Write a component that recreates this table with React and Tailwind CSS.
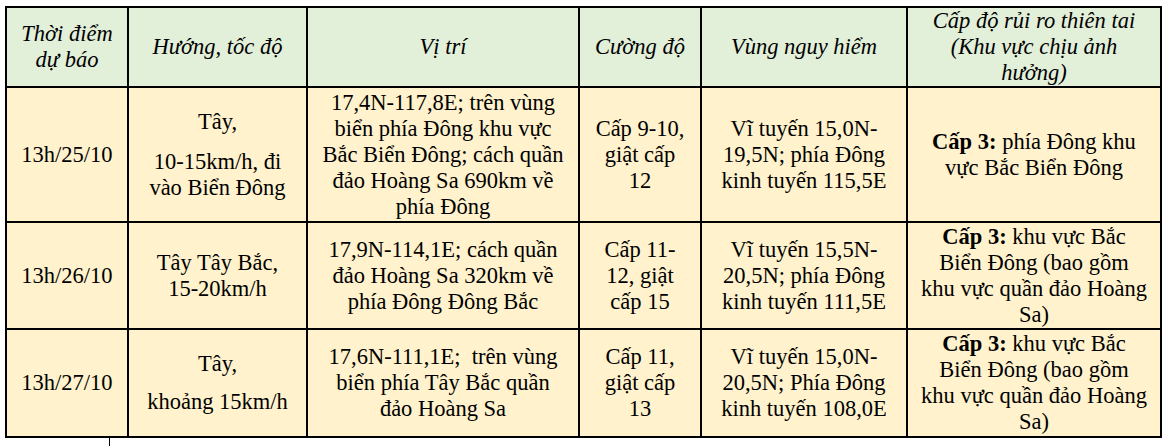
const headers = [
  ['Thời điểm', 'dự báo'],
  ['Hướng, tốc độ'],
  ['Vị trí'],
  ['Cường độ'],
  ['Vùng nguy hiểm'],
  ['Cấp độ rủi ro thiên tai', '(Khu vực chịu ảnh', 'hưởng)'],
]

const rows = [
  {
    h: 'h-[135px]',
    time: '13h/25/10',
    dir: [['Tây,'], ['10-15km/h, đi', 'vào Biển Đông']],
    gap: 'mt-[14px]',
    pos: ['17,4N-117,8E; trên vùng', 'biển phía Đông khu vực', 'Bắc Biển Đông; cách quần', 'đảo Hoàng Sa 690km về', 'phía Đông'],
    power: ['Cấp 9-10,', 'giật cấp', '12'],
    zone: ['Vĩ tuyến 15,0N-', '19,5N; phía Đông', 'kinh tuyến 115,5E'],
    risk: ['phía Đông khu', 'vực Bắc Biển Đông'],
  },
  {
    h: 'h-[107px]',
    time: '13h/26/10',
    dir: [['Tây Tây Bắc,', '15-20km/h']],
    pos: ['17,9N-114,1E; cách quần', 'đảo Hoàng Sa 320km về', 'phía Đông Đông Bắc'],
    power: ['Cấp 11-', '12, giật', 'cấp 15'],
    zone: ['Vĩ tuyến 15,5N-', '20,5N; phía Đông', 'kinh tuyến 111,5E'],
    risk: ['khu vực Bắc', 'Biển Đông (bao gồm', 'khu vực quần đảo Hoàng', 'Sa)'],
  },
  {
    h: 'h-[108px]',
    time: '13h/27/10',
    dir: [['Tây,'], ['khoảng 15km/h']],
    gap: 'mt-[12px]',
    pos: ['17,6N-111,1E;  trên vùng', 'biển phía Tây Bắc quần', 'đảo Hoàng Sa'],
    power: ['Cấp 11,', 'giật cấp', '13'],
    zone: ['Vĩ tuyến 15,0N-', '20,5N; Phía Đông', 'kinh tuyến 108,0E'],
    risk: ['khu vực Bắc', 'Biển Đông (bao gồm', 'khu vực quần đảo Hoàng', 'Sa)'],
  },
]

function Lines({ lines }) {
  return lines.map((l, i) => (
    <div key={i} className="whitespace-pre">
      {l}
    </div>
  ))
}

// font set on every cell so the table doesn't fall back to its own defaults
const cell =
  "border-2 border-black px-[6px] py-0 text-center align-middle [font-family:'Liberation_Serif',serif] text-[22.5px] leading-[26px] text-black"

export default function App() {
  return (
    <div className="min-h-screen w-full bg-white pl-[5px] pt-[6px]">
      <table className="w-[1157px] table-fixed border-collapse">
        <colgroup>
          <col className="w-[122px]" />
          <col className="w-[179px]" />
          <col className="w-[272px]" />
          <col className="w-[122px]" />
          <col className="w-[206px]" />
          <col className="w-[254px]" />
        </colgroup>
        <thead>
          <tr className="h-[80px] bg-[#e2efd9]">
            {headers.map((h, i) => (
              <th key={i} className={cell + ' font-normal italic'}>
                <Lines lines={h} />
              </th>
            ))}
          </tr>
        </thead>
        <tbody>
          {rows.map((r) => (
            <tr key={r.time} className={r.h + ' bg-[#fff2cc]'}>
              <td className={cell}>{r.time}</td>
              <td className={cell}>
                {r.dir.map((p, i) => (
                  <div key={i} className={i > 0 ? r.gap : ''}>
                    <Lines lines={p} />
                  </div>
                ))}
              </td>
              <td className={cell}>
                <Lines lines={r.pos} />
              </td>
              <td className={cell}>
                <Lines lines={r.power} />
              </td>
              <td className={cell}>
                <Lines lines={r.zone} />
              </td>
              <td className={cell}>
                <div className="whitespace-pre">
                  <b>Cấp 3:</b> {r.risk[0]}
                </div>
                <Lines lines={r.risk.slice(1)} />
              </td>
            </tr>
          ))}
        </tbody>
      </table>
      <div className="ml-[104px] h-[10px] w-px bg-black" />
    </div>
  )
}
